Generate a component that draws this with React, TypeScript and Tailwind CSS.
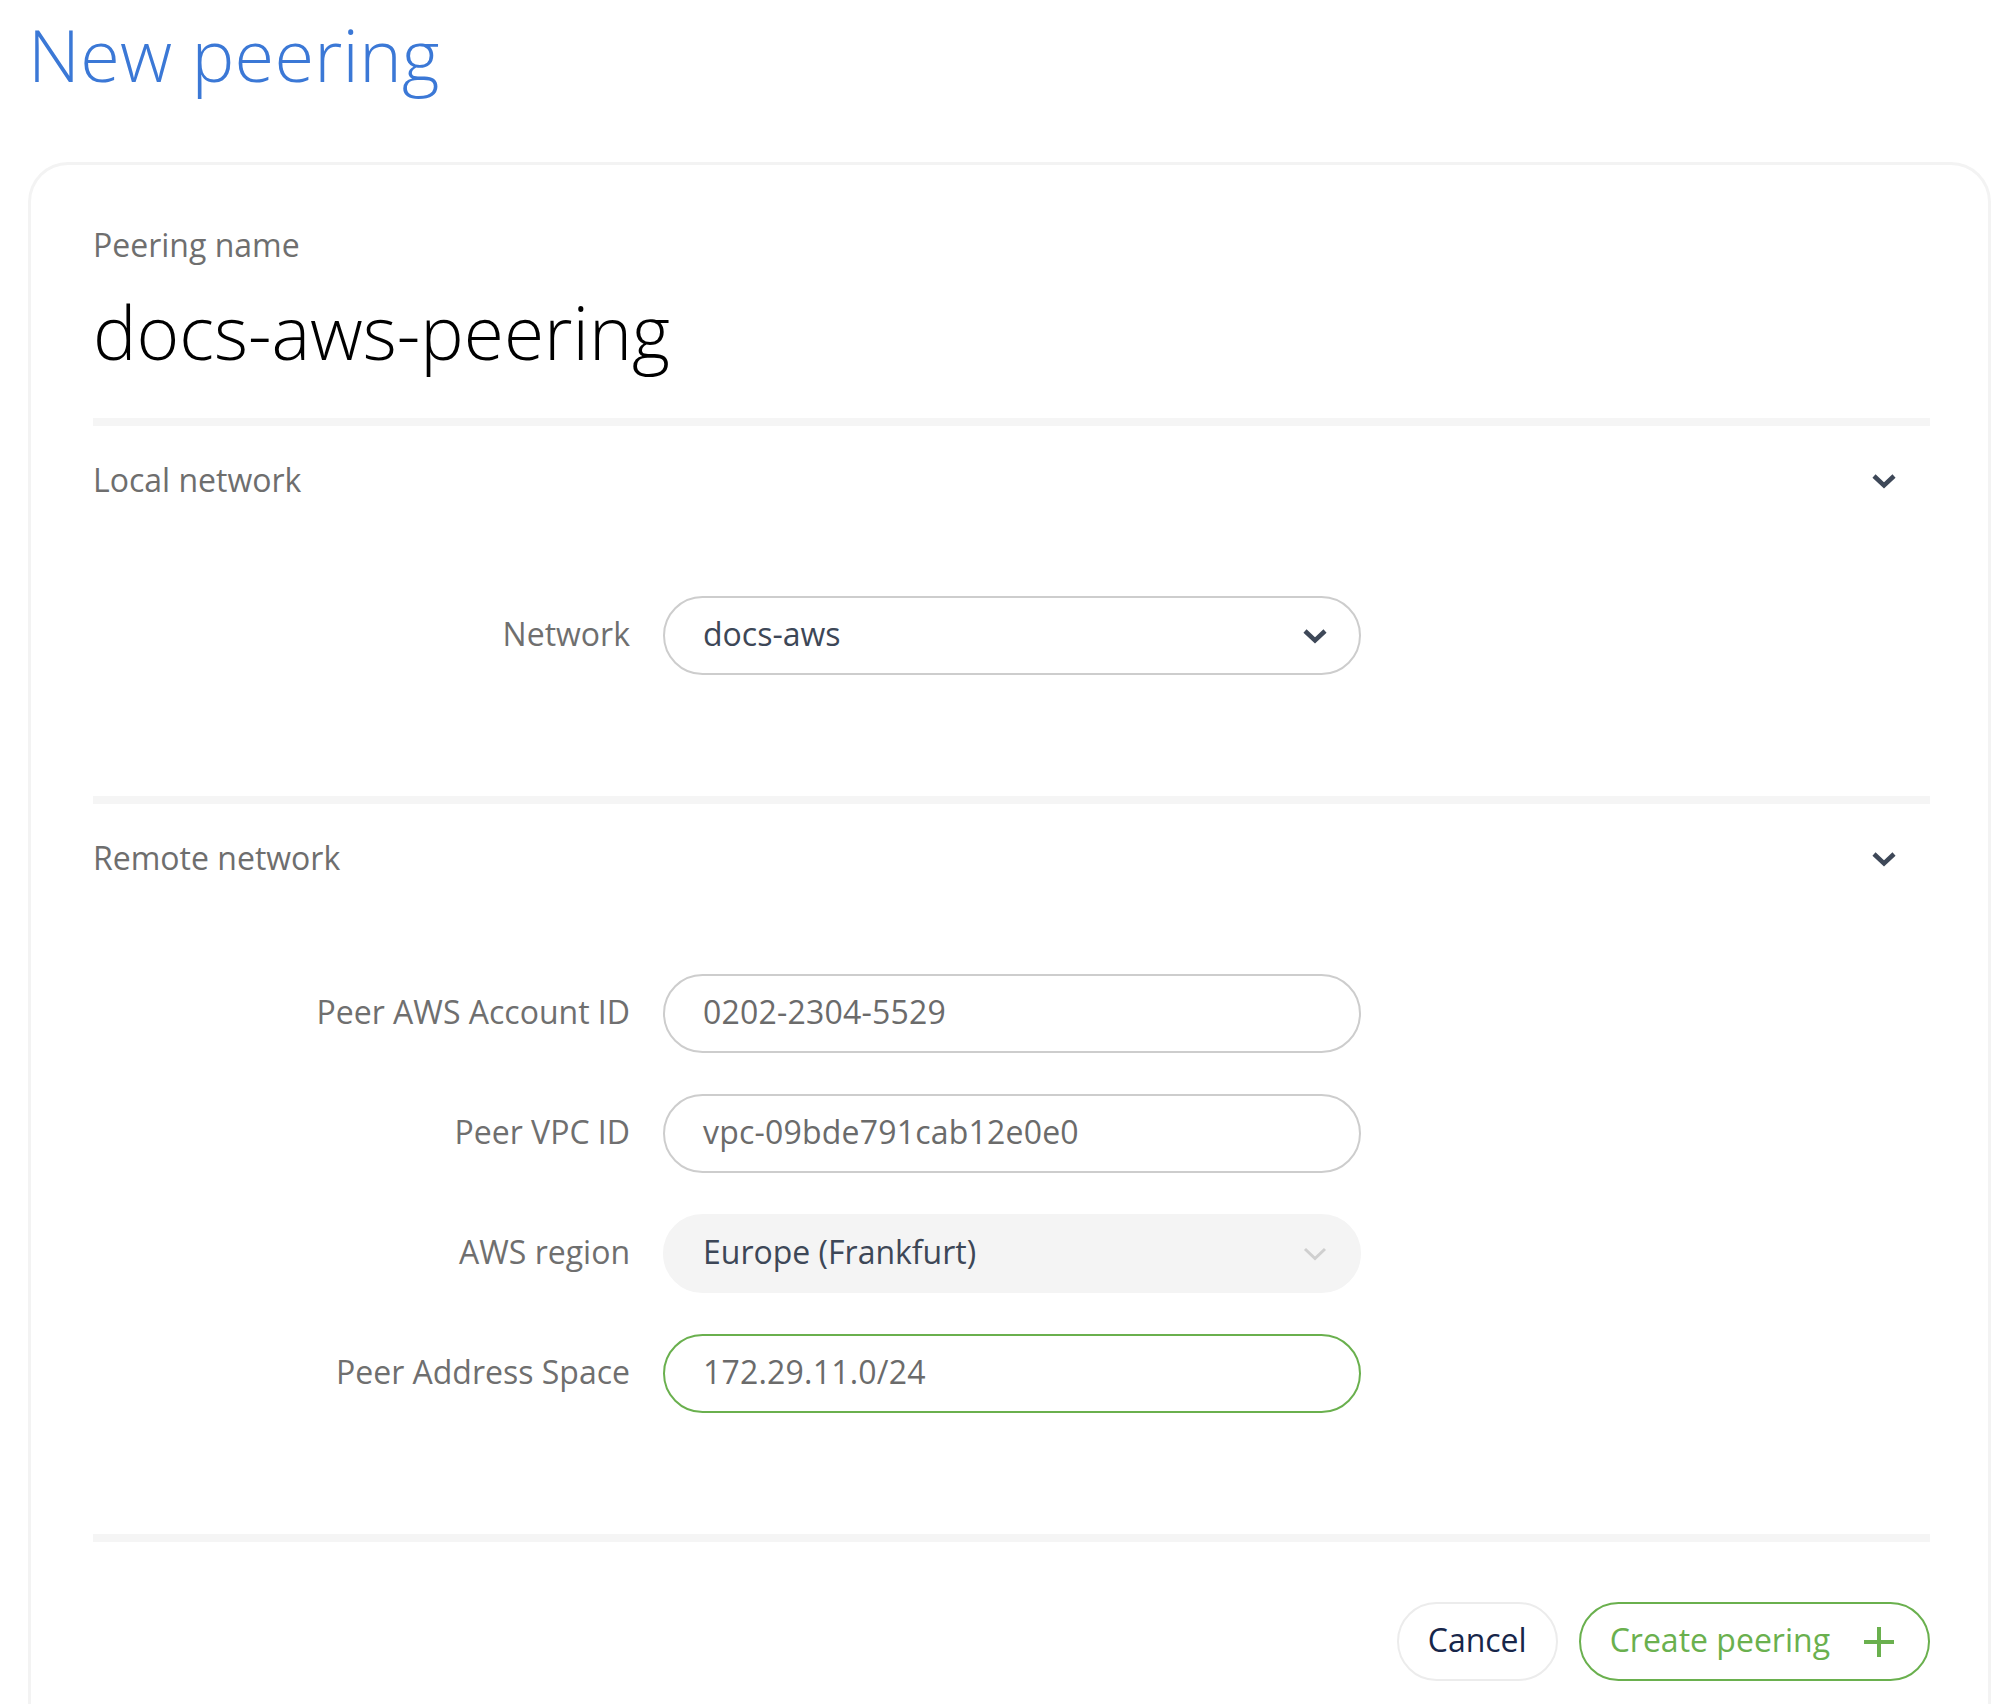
import React from "react";

function Chevron({ color = "#3e4858", width = 4.5 }: { color?: string; width?: number }) {
  return (
    <svg width="26" height="16" viewBox="0 0 26 16" fill="none">
      <polyline points="3,3 13,12.5 23,3" stroke={color} strokeWidth={width} strokeLinecap="butt" strokeLinejoin="miter" />
    </svg>
  );
}

function Plus() {
  return (
    <svg width="30" height="30" viewBox="0 0 30 30" fill="none">
      <line x1="15" y1="0" x2="15" y2="30" stroke="#6ab04e" strokeWidth="4" />
      <line x1="0" y1="15" x2="30" y2="15" stroke="#6ab04e" strokeWidth="4" />
    </svg>
  );
}

function Row({ label, children }: { label: string; children: React.ReactNode }) {
  return (
    <div className="grid grid-cols-[537px_698px] gap-x-[33px] items-center">
      <div className="text-right text-[32px] leading-[40px] text-[#6f6f6f] pb-[4px]">{label}</div>
      {children}
    </div>
  );
}

function TextInput({ value, green }: { value: string; green?: boolean }) {
  return (
    <div
      className={
        "h-[79px] rounded-full border-2 flex items-center pl-[38px] pb-[3px] text-[32px] leading-[40px] text-[#6b6b6b] tracking-[0.2px] " +
        (green ? "border-[#6ab04e]" : "border-[#cdcdcd]")
      }
    >
      {value}
    </div>
  );
}

function SelectBox({ value, disabled }: { value: string; disabled?: boolean }) {
  return (
    <div
      className={
        "h-[79px] rounded-full flex items-center justify-between pl-[40px] pr-[31px] text-[32px] leading-[40px] text-[#3d4757] " +
        (disabled ? "bg-[#f4f4f4] border-2 border-[#f4f4f4]" : "border-2 border-[#cdcdcd] bg-white")
      }
    >
      <span className="-ml-[2px] pb-[3px]">{value}</span>
      {disabled ? <Chevron color="#cfcfcf" width={3} /> : <Chevron />}
    </div>
  );
}

function SectionHeader({ title }: { title: string }) {
  return (
    <div className="h-[110px] flex items-center justify-between pr-[33px]">
      <span className="text-[32px] leading-[40px] text-[#6e6e6e] pb-[2px]">{title}</span>
      <Chevron />
    </div>
  );
}

export default function App() {
  return (
    <div className="min-h-screen bg-white font-['Open_Sans',sans-serif] overflow-hidden">
      <h1 className="pl-[28px] pt-[18px] text-[72px] leading-none font-light text-[#3b78d6] tracking-[0.3px]">New peering</h1>
      <div className="mt-[72px] ml-[28px] w-[1963px] h-[1600px] border-[3px] border-b-0 border-[#f3f3f3] rounded-t-[40px] pl-[62px] pr-[58px] pt-[60px]">
        <div className="text-[32px] leading-[40px] text-[#6f6f6f]">Peering name</div>
        <div className="mt-[30px] text-[73px] leading-none font-light text-black">docs-aws-peering</div>
        <div className="mt-[50px] h-[8px] bg-[#f5f5f5]" />

        <SectionHeader title="Local network" />
        <div className="mt-[60px] mb-[121px] flex flex-col gap-[41px]">
          <Row label="Network">
            <SelectBox value="docs-aws" />
          </Row>
        </div>
        <div className="h-[8px] bg-[#f5f5f5]" />

        <SectionHeader title="Remote network" />
        <div className="mt-[60px] mb-[121px] flex flex-col gap-[41px]">
          <Row label="Peer AWS Account ID">
            <TextInput value="0202-2304-5529" />
          </Row>
          <Row label="Peer VPC ID">
            <TextInput value="vpc-09bde791cab12e0e0" />
          </Row>
          <Row label="AWS region">
            <SelectBox value="Europe (Frankfurt)" disabled />
          </Row>
          <Row label="Peer Address Space">
            <TextInput value="172.29.11.0/24" green />
          </Row>
        </div>
        <div className="h-[8px] bg-[#f5f5f5]" />

        <div className="mt-[60px] flex justify-end gap-[21px]">
          <button className="h-[79px] rounded-full border-2 border-[#ececec] px-[29px] pb-[3px] text-[32px] leading-[40px] text-[#17264a]">
            Cancel
          </button>
          <button className="h-[79px] rounded-full border-2 border-[#6ab04e] pl-[29px] pr-[34px] flex items-center gap-[34px] text-[32px] leading-[40px] text-[#6ab04e]">
            <span className="pb-[3px]">Create peering</span>
            <Plus />
          </button>
        </div>
      </div>
    </div>
  );
}
